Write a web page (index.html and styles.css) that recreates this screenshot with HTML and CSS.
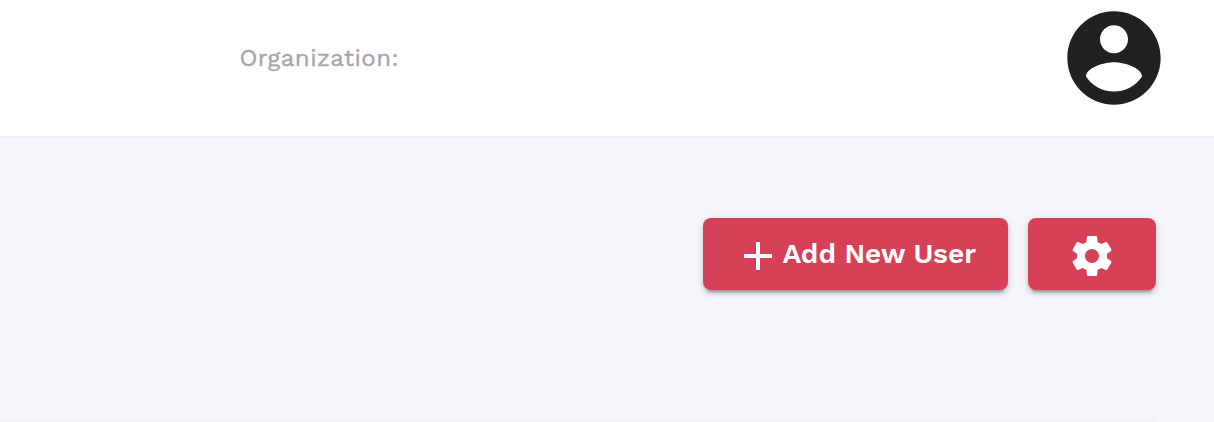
FILE: index.html
```html
<!DOCTYPE html>
<html lang="en">
<head>
    <meta charset="utf-8">
    <title>Users</title>
    <link rel="stylesheet" href="styles.css">
</head>
<body>
    <header class="header">
        <span class="organization">Organization:</span>
        <svg class="avatar" viewBox="0 0 24 24">
            <path d="M12 2C6.48 2 2 6.48 2 12s4.48 10 10 10 10-4.48 10-10S17.52 2 12 2zm0 3c1.66 0 3 1.34 3 3s-1.34 3-3 3-3-1.34-3-3 1.34-3 3-3zm0 14.2c-2.5 0-4.71-1.28-6-3.22.03-1.99 4-3.08 6-3.08 1.99 0 5.97 1.09 6 3.08-1.29 1.94-3.5 3.22-6 3.22z"/>
        </svg>
    </header>

    <main class="content">
        <div class="actions">
            <button type="button" class="btn btn-add">
                <svg class="icon" viewBox="0 0 24 24"><path d="M19 13h-6v6h-2v-6H5v-2h6V5h2v6h6v2z"/></svg>
                <span class="btn-label">Add New User</span>
            </button>
            <button type="button" class="btn btn-settings" aria-label="Settings">
                <svg class="icon" viewBox="0 0 24 24"><path d="M19.43 12.98c.04-.32.07-.64.07-.98s-.03-.66-.07-.98l2.11-1.65c.19-.15.24-.42.12-.64l-2-3.46c-.12-.22-.39-.3-.61-.22l-2.49 1c-.52-.4-1.08-.73-1.69-.98l-.38-2.65C14.46 2.18 14.25 2 14 2h-4c-.25 0-.46.18-.49.42l-.38 2.65c-.61.25-1.17.59-1.69.98l-2.49-1c-.23-.09-.49 0-.61.22l-2 3.46c-.13.22-.07.49.12.64l2.11 1.65c-.04.32-.07.65-.07.98s.03.66.07.98l-2.11 1.65c-.19.15-.24.42-.12.64l2 3.46c.12.22.39.3.61.22l2.49-1c.52.4 1.08.73 1.69.98l.38 2.65c.03.24.24.42.49.42h4c.25 0 .46-.18.49-.42l.38-2.65c.61-.25 1.17-.59 1.69-.98l2.49 1c.23.09.49 0 .61-.22l2-3.46c.12-.22.07-.49-.12-.64l-2.11-1.65zM12 15.5c-1.93 0-3.5-1.57-3.5-3.5s1.57-3.5 3.5-3.5 3.5 1.57 3.5 3.5-1.57 3.5-3.5 3.5z"/></svg>
            </button>
        </div>
        <div class="panel"></div>
    </main>
</body>
</html>
```
FILE: styles.css
```css
* {
    box-sizing: border-box;
}
body {
    margin: 0;
    background-color: #f4f6fa;
    font-family: "Work Sans", Inter, sans-serif;
}
.header {
    display: flex;
    align-items: flex-start;
    justify-content: space-between;
    height: 138px;
    padding: 2px 44px 0 240px;
    background-color: #fff;
    border-bottom: 2px solid #f0f0f2;
}
.organization {
    margin: 40px 0 0 -0.5px;
    color: #a6a6ab;
    font-size: 24px;
    font-weight: 400;
    line-height: 32px;
    letter-spacing: 0.48px;
    -webkit-text-stroke: 0.4px #a6a6ab;
}
.avatar {
    width: 112px;
    height: 112px;
    fill: #212121;
}
.content {
    padding: 80px 58px 0 0;
}
.actions {
    display: flex;
    justify-content: flex-end;
    gap: 20px;
}
.btn {
    display: flex;
    align-items: center;
    height: 72px;
    padding: 4px 0 0;
    border: none;
    border-radius: 8px;
    background-color: #d64158;
    color: #fff;
    font-family: inherit;
    cursor: pointer;
    box-shadow: 0 6px 2px -4px rgba(0, 0, 0, 0.2), 0 4px 4px rgba(0, 0, 0, 0.14), 0 2px 10px rgba(0, 0, 0, 0.12);
}
.btn-add {
    width: 305px;
    padding-left: 31.4px;
}
.btn-settings {
    justify-content: center;
    width: 128px;
}
.btn-label {
    margin-top: -5px;
    font-size: 28px;
    font-weight: 600;
    letter-spacing: 0;
    white-space: nowrap;
}
.icon {
    flex-shrink: 0;
    width: 48px;
    height: 48px;
    fill: #fff;
}
.panel {
    height: 1px;
    margin-top: 131px;
    background-color: #f1f2f5;
    box-shadow: 0 0 3px rgba(0, 0, 0, 0.05);
}
```
